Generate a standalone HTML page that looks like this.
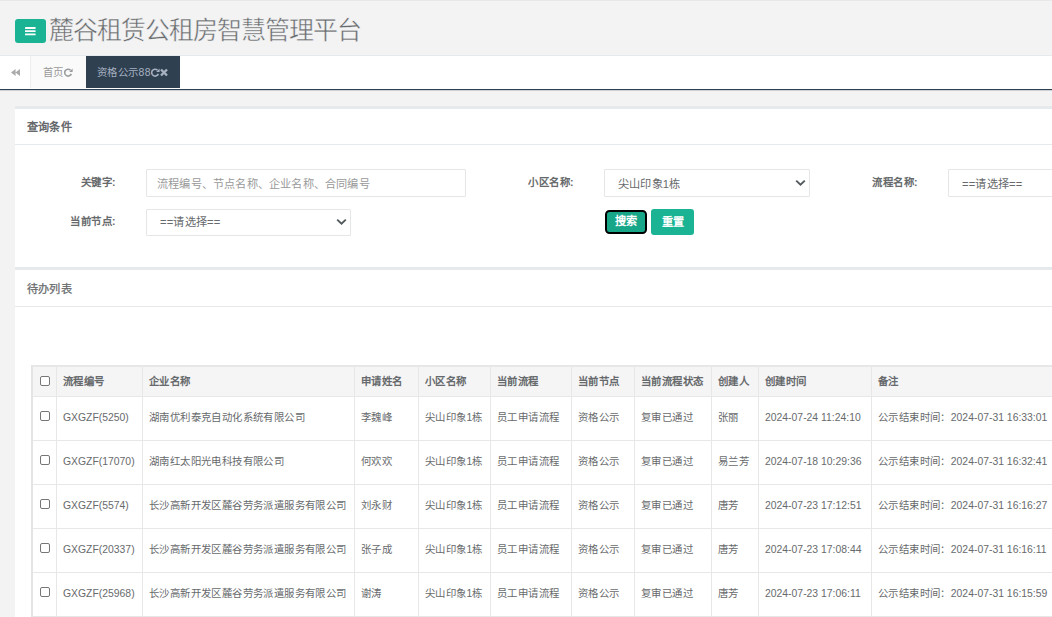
<!DOCTYPE html>
<html lang="zh-CN">
<head>
<meta charset="utf-8">
<title>麓谷租赁公租房智慧管理平台</title>
<style>
*{box-sizing:border-box;margin:0;padding:0}
html,body{width:1052px;height:617px;overflow:hidden}
body{background:#f3f3f4;font-family:"Liberation Sans",sans-serif;font-size:10.4px;color:#676a6c;position:relative}
.abs{position:absolute}
#topline{left:0;top:0;width:1052px;height:1px;background:#e7eaec}
#header{left:0;top:0;width:1052px;height:56px;border-top:1px solid #e6e8ea;border-bottom:1px solid #e7eaec;background:#f3f3f4}
#menubtn{left:15px;top:18px;width:31px;height:24px;background:#1ab394;border-radius:3px}
#menubtn svg{position:absolute;left:10px;top:8px}
#title{left:49px;top:12px;-webkit-text-stroke:0.45px #f3f3f4;height:34px;line-height:34px;font-size:25px;letter-spacing:-1px;font-weight:100;color:#676a6c;white-space:nowrap;width:330px;overflow:hidden}
#tabbar{left:0;top:56px;width:1052px;height:35px;background:#fff;border-bottom:1px solid #cdd1d5;box-shadow:inset 0 -1px 0 #2f4050}
#tabL{left:0;top:0;width:31px;height:32px;background:#fff;border-right:1px solid #eee}
#tabL svg{position:absolute;left:10.5px;top:13px}
.tab{top:0;height:32px;line-height:34px;font-size:10.4px;letter-spacing:.4px;white-space:nowrap;overflow:hidden}
#tab1{left:31px;width:55px;background:#fafafa;color:#999;padding-left:12px}
#tab2{left:86px;width:94px;background:#2f4050;color:#a7b1c2;padding-left:11px}
.tab svg{vertical-align:-1px}
.ibox{left:15px;width:1037px;background:#fff;border-top:3px solid #e7eaec}
.ibox .ttl{position:absolute;left:0;top:0;width:100%;height:36px;border-bottom:1px solid #e7eaec;padding-left:12px;padding-top:1px;line-height:34px;letter-spacing:.2px;font-size:11.2px;font-weight:bold;color:#676a6c}
#ibox1{top:106px;height:161px}
#ibox2{top:267px;height:350px}
#ibox2 .ttl{height:37px;padding-top:2px;font-weight:normal;-webkit-text-stroke:.25px #676a6c}
.lbl{font-weight:bold;font-size:10.4px;letter-spacing:.5px;text-align:right;white-space:nowrap;height:14px;line-height:14px}
.fc{background:#fff;border:1px solid #e5e6e7;border-radius:1px;height:28px;line-height:26px;padding-top:1px;font-size:11.2px;letter-spacing:.2px;color:#676a6c;white-space:nowrap;overflow:hidden}
.fc.ph{color:#999;padding-left:10px}
.fc.sel{padding-left:13px}
.fc svg{position:absolute;right:3.5px;top:9px}
.btn{background:#1ab394;color:#fff;border-radius:3px;height:26px;line-height:26px;text-align:center;font-size:11.2px;font-weight:bold;white-space:nowrap;overflow:hidden}
#btn1{left:605px;top:210px;width:42px;height:24px;background:#18a689;border:2px solid #000;border-radius:4.5px;line-height:19px}
#btn2{left:651px;top:209px;width:43px}
table{position:absolute;left:31px;top:365px;width:1238px;border-collapse:separate;border-spacing:0;table-layout:fixed;font-size:10.4px;color:#676a6c;border-left:2px solid #e4e4e4;border-top:2px solid #e7e7e7}
th,td{line-height:14px;border-right:1px solid #e7e7e7;border-bottom:1px solid #e7e7e7;padding:0 0 0 6px;text-align:left;vertical-align:middle;white-space:nowrap;overflow:hidden;font-weight:normal}
th{height:30px;padding-top:1px;background:#f5f5f6;font-weight:bold;border-bottom-color:#e7e7e7}
td{height:44px}
.cb{display:block;width:10px;height:10px;border:1px solid #767676;border-radius:2px;background:#fff;margin-left:1px;position:relative;top:-1px}
td .cb{top:-2px}
td{padding-bottom:2px}
table{letter-spacing:.4px}
.l{letter-spacing:0}
</style>
</head>
<body>
<div id="header" class="abs">
  <div id="menubtn" class="abs"><svg width="11" height="9" viewBox="0 0 11 9"><rect x="0" y="0" width="10.6" height="1.9" rx="0.4" fill="#fff"/><rect x="0" y="3.2" width="10.6" height="1.9" rx="0.4" fill="#fff"/><rect x="0" y="6.4" width="10.6" height="1.9" rx="0.4" fill="#fff"/></svg></div>
  <div id="title" class="abs">麓谷租赁公租房智慧管理平台</div>
</div>
<div id="tabbar" class="abs">
  <div id="tabL" class="abs"><svg width="9" height="7" viewBox="0 0 9 7"><path d="M4.6 0 L4.6 7 L0 3.5 Z M9 0 L9 7 L4.4 3.5 Z" fill="#a9abad"/></svg></div>
  <div id="tab1" class="abs tab">首页<svg width="9" height="9" viewBox="0.5 0 9.5 9.5"><path d="M8.2 6.2 A3.6 3.6 0 1 1 7.4 2.4" fill="none" stroke="#999c9e" stroke-width="1.7"/><path d="M9.6 0.6 L9.6 4.2 L6 4.2 Z" fill="#999c9e"/></svg></div>
  <div id="tab2" class="abs tab">资格公示88<svg width="9" height="9" viewBox="0.5 0 9.5 9.5"><path d="M8.2 6.2 A3.6 3.6 0 1 1 7.4 2.4" fill="none" stroke="#a7b1c2" stroke-width="1.7"/><path d="M9.6 0.6 L9.6 4.2 L6 4.2 Z" fill="#a7b1c2"/></svg><svg width="8" height="9" viewBox="0.5 0.5 8 9"><path d="M1.5 2 L7.5 8 M7.5 2 L1.5 8" stroke="#a7b1c2" stroke-width="2.4" fill="none"/></svg></div>
</div>

<div id="ibox1" class="abs ibox">
  <div class="ttl">查询条件</div>
</div>
<div class="abs lbl" style="left:40px;top:176px;width:76px">关键字:</div>
<div class="abs fc ph" style="left:146px;top:169px;width:320px">流程编号、节点名称、企业名称、合同编号</div>
<div class="abs lbl" style="left:500px;top:176px;width:74px">小区名称:</div>
<div class="abs fc sel" style="left:604px;top:169px;width:206px">尖山印象1栋<svg width="11" height="8" viewBox="0 0 11 8"><path d="M1.2 1.6 L5.5 5.6 L9.8 1.6" fill="none" stroke="#535a5e" stroke-width="1.9" stroke-linejoin="miter"/></svg></div>
<div class="abs lbl" style="left:840px;top:176px;width:78px">流程名称:</div>
<div class="abs fc sel" style="left:948px;top:169px;width:206px">==请选择==</div>
<div class="abs lbl" style="left:40px;top:215px;width:76px">当前节点:</div>
<div class="abs fc sel" style="left:146px;top:209px;width:205px;height:27px;line-height:25px;padding-top:0">==请选择==<svg style="top:8px" width="11" height="8" viewBox="0 0 11 8"><path d="M1.2 1.6 L5.5 5.6 L9.8 1.6" fill="none" stroke="#535a5e" stroke-width="1.9" stroke-linejoin="miter"/></svg></div>
<div id="btn1" class="abs btn">搜索</div>
<div id="btn2" class="abs btn">重置</div>

<div id="ibox2" class="abs ibox">
  <div class="ttl">待办列表</div>
</div>
<table>
<colgroup><col style="width:24px"><col style="width:86px"><col style="width:212px"><col style="width:64px"><col style="width:72px"><col style="width:81px"><col style="width:63px"><col style="width:77px"><col style="width:47px"><col style="width:113px"><col style="width:399px"></colgroup>
<thead><tr><th><span class="cb"></span></th><th>流程编号</th><th>企业名称</th><th>申请姓名</th><th>小区名称</th><th>当前流程</th><th>当前节点</th><th>当前流程状态</th><th>创建人</th><th>创建时间</th><th>备注</th></tr></thead>
<tbody>
<tr><td><span class="cb"></span></td><td class="l">GXGZF(5250)</td><td>湖南优利泰克自动化系统有限公司</td><td>李魏峰</td><td>尖山印象<span class="l">1</span>栋</td><td>员工申请流程</td><td>资格公示</td><td>复审已通过</td><td>张丽</td><td class="l">2024-07-24 11:24:10</td><td>公示结束时间：<span class="l">2024-07-31 16:33:01</span></td></tr>
<tr><td><span class="cb"></span></td><td class="l">GXGZF(17070)</td><td>湖南红太阳光电科技有限公司</td><td>何欢欢</td><td>尖山印象<span class="l">1</span>栋</td><td>员工申请流程</td><td>资格公示</td><td>复审已通过</td><td>易兰芳</td><td class="l">2024-07-18 10:29:36</td><td>公示结束时间：<span class="l">2024-07-31 16:32:41</span></td></tr>
<tr><td><span class="cb"></span></td><td class="l">GXGZF(5574)</td><td>长沙高新开发区麓谷劳务派遣服务有限公司</td><td>刘永财</td><td>尖山印象<span class="l">1</span>栋</td><td>员工申请流程</td><td>资格公示</td><td>复审已通过</td><td>唐芳</td><td class="l">2024-07-23 17:12:51</td><td>公示结束时间：<span class="l">2024-07-31 16:16:27</span></td></tr>
<tr><td><span class="cb"></span></td><td class="l">GXGZF(20337)</td><td>长沙高新开发区麓谷劳务派遣服务有限公司</td><td>张子成</td><td>尖山印象<span class="l">1</span>栋</td><td>员工申请流程</td><td>资格公示</td><td>复审已通过</td><td>唐芳</td><td class="l">2024-07-23 17:08:44</td><td>公示结束时间：<span class="l">2024-07-31 16:16:11</span></td></tr>
<tr><td><span class="cb"></span></td><td class="l">GXGZF(25968)</td><td>长沙高新开发区麓谷劳务派遣服务有限公司</td><td>谢涛</td><td>尖山印象<span class="l">1</span>栋</td><td>员工申请流程</td><td>资格公示</td><td>复审已通过</td><td>唐芳</td><td class="l">2024-07-23 17:06:11</td><td>公示结束时间：<span class="l">2024-07-31 16:15:59</span></td></tr>
</tbody>
</table>
</body>
</html>
